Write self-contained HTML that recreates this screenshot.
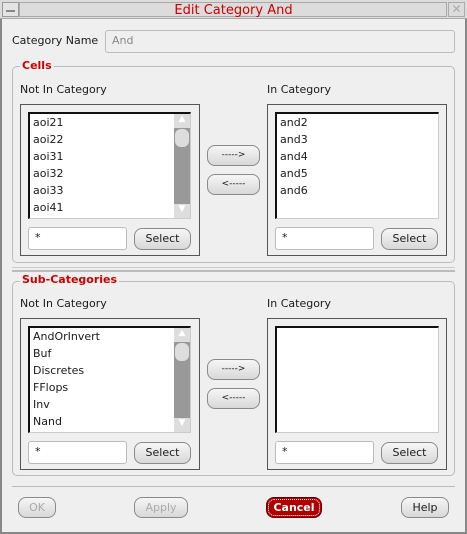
<!DOCTYPE html><html><head><style>
*{margin:0;padding:0;box-sizing:border-box}
body{width:467px;height:534px;background:#efefef;font-family:"DejaVu Sans","Liberation Sans",sans-serif;font-size:11px;color:#1a1a1a;position:relative;overflow:hidden}
.a{position:absolute}
.btn{position:absolute;border:1px solid #8a8a8a;border-radius:8px;background:linear-gradient(#f6f6f6,#d8d8d8);text-align:center;line-height:19px;font-size:11px}
.frame{position:absolute;border:1px solid #555;}
.list{position:absolute;background:#fff;border-top:2px solid #111;border-left:2px solid #111;border-right:1px solid #ccc;border-bottom:1px solid #ccc}
.list div{height:17px;line-height:17px;padding-left:3px}
.sb{position:absolute;background:#999;}
.inp{position:absolute;background:#fff;border:1px solid #bbb;border-radius:3px;padding-left:6px;line-height:20px}
.grp{position:absolute;border:1px solid #bbb;border-radius:5px}
.leg{position:absolute;background:#efefef;color:#c00;font-weight:bold;padding:0 2px}
</style></head><body>
<div class="a" style="left:0;top:0;width:467px;height:534px;border:2px solid #888;border-top:none"></div>
<div class="a" style="left:0;top:0;width:467px;height:19px;background:#dcdcdc;border-bottom:1px solid #aaa"></div>
<div class="a" style="left:2px;top:2px;width:17px;height:15px;border:1px solid #999;background:#e4e4e4"><div class="a" style="left:3px;top:7px;width:9px;height:2px;background:#888"></div></div>
<div class="a" style="left:19px;top:2px;width:428px;height:15px;border:1px solid #aaa"></div>
<div class="a" style="left:448px;top:2px;width:17px;height:15px;border:1px solid #aaa;color:#aaa;text-align:center;line-height:13px;font-size:12px">✕</div>
<div class="a" style="left:0;top:2px;width:467px;text-align:center;color:#c00;font-size:13px;line-height:17px">Edit Category And</div>

<div class="a" style="left:12px;top:34px">Category Name</div>
<div class="inp" style="left:105px;top:30px;width:350px;height:23px;color:#888;background:#efefef">And</div>

<!-- Cells -->
<div class="grp" style="left:12px;top:66px;width:443px;height:197px"></div>
<div class="leg" style="left:20px;top:59px">Cells</div>
<div class="a" style="left:20px;top:83px">Not In Category</div>
<div class="a" style="left:267px;top:83px">In Category</div>
<div class="frame" style="left:20px;top:104px;width:180px;height:152px"></div>
<div class="list" style="left:28px;top:112px;width:163px;height:107px"><div>aoi21</div><div>aoi22</div><div>aoi31</div><div>aoi32</div><div>aoi33</div><div>aoi41</div></div>
<div class="sb" style="left:174px;top:114px;width:16px;height:104px"><div class="a" style="left:0;top:0;width:16px;height:14px;background:#ddd;color:#fff;font-size:9px;text-align:center">▲</div><div class="a" style="left:1px;top:15px;width:14px;height:18px;background:#ddd;border-radius:6px"></div><div class="a" style="left:0;bottom:0;width:16px;height:14px;background:#ddd;color:#fff;font-size:9px;text-align:center">▼</div></div>
<div class="inp" style="left:28px;top:227px;width:99px;height:23px">*</div>
<div class="btn" style="left:134px;top:228px;width:57px;height:22px">Select</div>
<div class="btn" style="left:207px;top:145px;width:53px;height:21px;font-size:9px">-----&gt;</div>
<div class="btn" style="left:207px;top:174px;width:53px;height:21px;font-size:9px">&lt;-----</div>
<div class="frame" style="left:267px;top:104px;width:180px;height:152px"></div>
<div class="list" style="left:275px;top:112px;width:164px;height:107px"><div>and2</div><div>and3</div><div>and4</div><div>and5</div><div>and6</div></div>
<div class="inp" style="left:275px;top:227px;width:99px;height:23px">*</div>
<div class="btn" style="left:381px;top:228px;width:57px;height:22px">Select</div>

<div class="a" style="left:12px;top:267px;width:443px;height:1px;background:#ccc"></div>
<div class="a" style="left:12px;top:270px;width:443px;height:2px;background:#bbb"></div>

<!-- Sub-Categories -->
<div class="grp" style="left:12px;top:281px;width:443px;height:195px"></div>
<div class="leg" style="left:20px;top:273px">Sub-Categories</div>
<div class="a" style="left:20px;top:297px">Not In Category</div>
<div class="a" style="left:267px;top:297px">In Category</div>
<div class="frame" style="left:20px;top:318px;width:180px;height:152px"></div>
<div class="list" style="left:28px;top:326px;width:163px;height:107px"><div>AndOrInvert</div><div>Buf</div><div>Discretes</div><div>FFlops</div><div>Inv</div><div>Nand</div></div>
<div class="sb" style="left:174px;top:328px;width:16px;height:104px"><div class="a" style="left:0;top:0;width:16px;height:14px;background:#ddd;color:#fff;font-size:9px;text-align:center">▲</div><div class="a" style="left:1px;top:15px;width:14px;height:18px;background:#ddd;border-radius:6px"></div><div class="a" style="left:0;bottom:0;width:16px;height:14px;background:#ddd;color:#fff;font-size:9px;text-align:center">▼</div></div>
<div class="inp" style="left:28px;top:441px;width:99px;height:23px">*</div>
<div class="btn" style="left:134px;top:442px;width:57px;height:22px">Select</div>
<div class="btn" style="left:207px;top:359px;width:53px;height:21px;font-size:9px">-----&gt;</div>
<div class="btn" style="left:207px;top:388px;width:53px;height:21px;font-size:9px">&lt;-----</div>
<div class="frame" style="left:267px;top:318px;width:180px;height:152px"></div>
<div class="list" style="left:275px;top:326px;width:164px;height:107px"></div>
<div class="inp" style="left:275px;top:441px;width:99px;height:23px">*</div>
<div class="btn" style="left:381px;top:442px;width:57px;height:22px">Select</div>

<div class="a" style="left:12px;top:486px;width:443px;height:1px;background:#bbb"></div>
<div class="btn" style="left:18px;top:497px;width:38px;height:21px;color:#aaa">OK</div>
<div class="btn" style="left:134px;top:497px;width:54px;height:21px;color:#aaa">Apply</div>
<div class="btn" style="left:266px;top:497px;width:56px;height:21px;background:#b00000;border-color:#600;color:#fff;font-weight:bold;outline:1px dotted #fff;outline-offset:-3px">Cancel</div>
<div class="btn" style="left:401px;top:497px;width:48px;height:21px">Help</div>
</body></html>
